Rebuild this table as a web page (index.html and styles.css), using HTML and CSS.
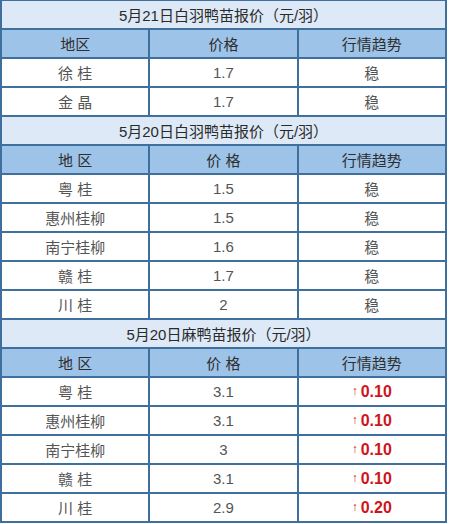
FILE: index.html
```html
<!DOCTYPE html>
<html>
<head>
<meta charset="utf-8">
<link rel="stylesheet" href="styles.css">
</head>
<body>
<table class="price">
  <tr class="title"><td colspan="3">5月21日白羽鸭苗报价（元/羽）</td></tr>
  <tr class="head"><td>地区</td><td>价格</td><td>行情趋势</td></tr>
  <tr><td>徐 桂</td><td>1.7</td><td>稳</td></tr>
  <tr><td>金 晶</td><td>1.7</td><td>稳</td></tr>
  <tr class="title"><td colspan="3">5月20日白羽鸭苗报价（元/羽）</td></tr>
  <tr class="head"><td>地 区</td><td>价 格</td><td>行情趋势</td></tr>
  <tr><td>粤 桂</td><td>1.5</td><td>稳</td></tr>
  <tr><td>惠州桂柳</td><td>1.5</td><td>稳</td></tr>
  <tr><td>南宁桂柳</td><td>1.6</td><td>稳</td></tr>
  <tr><td>赣 桂</td><td>1.7</td><td>稳</td></tr>
  <tr><td>川 桂</td><td>2</td><td>稳</td></tr>
  <tr class="title"><td colspan="3">5月20日麻鸭苗报价（元/羽）</td></tr>
  <tr class="head"><td>地 区</td><td>价 格</td><td>行情趋势</td></tr>
  <tr><td>粤 桂</td><td>3.1</td><td class="up"><span class="arrow">↑</span>0.10</td></tr>
  <tr><td>惠州桂柳</td><td>3.1</td><td class="up"><span class="arrow">↑</span>0.10</td></tr>
  <tr><td>南宁桂柳</td><td>3</td><td class="up"><span class="arrow">↑</span>0.10</td></tr>
  <tr><td>赣 桂</td><td>3.1</td><td class="up"><span class="arrow">↑</span>0.10</td></tr>
  <tr><td>川 桂</td><td>2.9</td><td class="up"><span class="arrow">↑</span>0.20</td></tr>
</table>
</body>
</html>
```

FILE: styles.css
```css
html, body {
  margin: 0;
  padding: 0;
  background: #ffffff;
}
body {
  font-family: "Liberation Sans", "Noto Sans CJK SC", sans-serif;
}
.price {
  border-collapse: collapse;
  width: 447px;
  table-layout: fixed;
  margin-top: -1px;
}
.price td {
  border: 2px solid #3f6f9d;
  height: 29px;
  padding: 0;
  text-align: center;
  vertical-align: middle;
  font-size: 15px;
  color: #555555;
  box-sizing: border-box;
  width: 149px;
}
.price tr.title td {
  background: #dde9f6;
  color: #2a2a2a;
  font-size: 15px;
}
.price tr.head td {
  background: #9ec3e8;
  color: #2e2e2e;
}
.price td.up {
  color: #d0141b;
  font-weight: bold;
  font-size: 16px;
}
.price td.up .arrow {
  font-weight: normal;
  font-size: 12px;
  margin-right: 3px;
  position: relative;
  top: -2px;
}
```
